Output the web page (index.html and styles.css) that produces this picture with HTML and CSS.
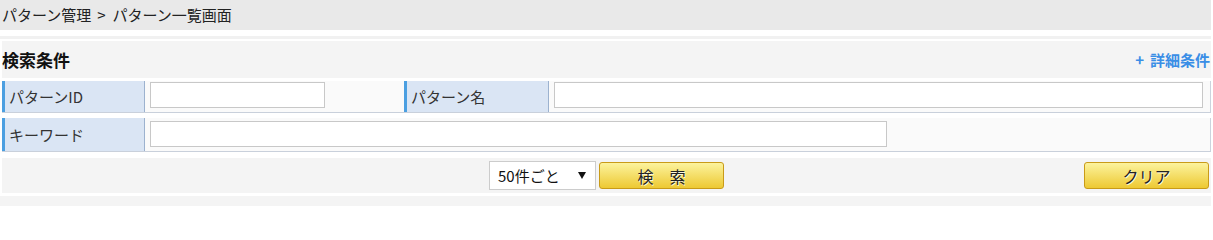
FILE: index.html
```html
<!DOCTYPE html>
<html lang="ja">
<head>
<meta charset="utf-8">
<title>パターン一覧画面</title>
<link rel="stylesheet" href="styles.css">
</head>
<body>
<div class="page">
  <div class="breadcrumb">パターン管理<span class="crumb-sep">&gt;</span>パターン一覧画面</div>
  <div class="divider"></div>
  <div class="content">
    <div class="section-head">
      <h2 class="section-title">検索条件</h2>
      <a class="detail-link" href="#"><span class="plus">+</span>詳細条件</a>
    </div>
    <div class="row row-a">
      <div class="label">パターンID</div>
      <div class="value"><input class="field field-id" type="text"></div>
      <div class="label">パターン名</div>
      <div class="value"><input class="field field-name" type="text"></div>
    </div>
    <div class="row row-b">
      <div class="label">キーワード</div>
      <div class="value"><input class="field field-keyword" type="text"></div>
    </div>
    <div class="actions">
      <div class="actions-center">
        <div class="select">
          <span class="select-text">50件ごと</span>
          <svg class="select-arrow" width="8" height="7" viewBox="0 0 8 7"><polygon points="0,0 8,0 4,7" fill="#111"/></svg>
        </div>
        <button class="btn btn-search" type="button">検　索</button>
      </div>
      <button class="btn btn-clear" type="button">クリア</button>
    </div>
  </div>
  <div class="bottom-strip"></div>
</div>
</body>
</html>
```

FILE: styles.css
```css
html, body {
  margin: 0;
  padding: 0;
  background: #fff;
}

body {
  font-family: "Noto Sans CJK JP", "Noto Sans", sans-serif;
  font-size: 15px;
  color: #222;
}

.page {
  width: 1211px;
}

.breadcrumb {
  height: 30px;
  line-height: 30px;
  background: #e9e9e9;
  padding-left: 2px;
  font-size: 15px;
  color: #222;
}

.crumb-sep {
  margin: 0 7px 0 6px;
}

.divider {
  margin-top: 6px;
  height: 3px;
  background: #f1f1f1;
}

.content {
  padding: 2px 0 0 2px;
}

.section-head {
  height: 37px;
  background: #f4f4f4;
  display: flex;
  align-items: center;
  justify-content: space-between;
  padding-right: 1px;
}

.section-title {
  margin: 0;
  font-size: 17px;
  font-weight: bold;
  color: #111;
}

.detail-link {
  color: #3a8ee6;
  font-weight: bold;
  font-size: 15px;
  text-decoration: none;
}

.plus {
  margin-right: 6px;
}

.row {
  display: grid;
  background: #fafafa;
  border-bottom: 1px solid #c9d0db;
  border-right: 1px solid #ccd3dd;
}

.row-a {
  margin-top: 3px;
  height: 32px;
  grid-template-columns: 143px 259px 145px 1fr;
}

.row-b {
  margin-top: 5px;
  height: 34px;
  grid-template-columns: 143px 1fr;
}

.row, .row * {
  box-sizing: border-box;
}

.label {
  background: #dae5f4;
  border-left: 3px solid #4b9fe1;
  border-right: 1px solid #9cb2cf;
  padding-left: 4px;
  display: flex;
  align-items: center;
  color: #333;
  font-size: 15px;
}

.value {
  padding-left: 5px;
}

.row-a .value {
  padding-top: 1px;
}

.row-b .value {
  padding-top: 3px;
}

.field {
  display: block;
  height: 26px;
  border: 1px solid #c8c8c8;
  background: #fff;
  padding: 0 4px;
  margin: 0;
  font-family: inherit;
  font-size: 15px;
  box-sizing: border-box;
}

.field-id {
  width: 175px;
}

.field-name {
  width: 649px;
}

.field-keyword {
  width: 737px;
}

.actions {
  margin-top: 6px;
  height: 35px;
  background: #f4f4f4;
  display: grid;
  grid-template-columns: 1fr auto 1fr;
  align-items: center;
}

.actions-center {
  grid-column: 2;
  display: flex;
  align-items: center;
  gap: 3px;
}

.select {
  width: 107px;
  height: 29px;
  box-sizing: border-box;
  border: 1px solid #cccccc;
  background: #fff;
  display: flex;
  align-items: center;
  justify-content: space-between;
  padding: 0 9px 0 8px;
  font-size: 15px;
  color: #111;
}

.select-arrow {
  display: block;
}

.btn {
  width: 125px;
  height: 27px;
  box-sizing: border-box;
  border: 1px solid #c99b18;
  border-radius: 3px;
  background: linear-gradient(#fcf39d, #edc933);
  font-family: inherit;
  font-size: 16px;
  color: #222;
  text-shadow: 1px 1px 0 rgba(255, 255, 255, 0.8);
  padding: 0;
  cursor: pointer;
}

.btn-clear {
  grid-column: 3;
  justify-self: end;
  margin-right: 2px;
}

.bottom-strip {
  margin-top: 3px;
  height: 10px;
  background: #f4f4f4;
}
```
